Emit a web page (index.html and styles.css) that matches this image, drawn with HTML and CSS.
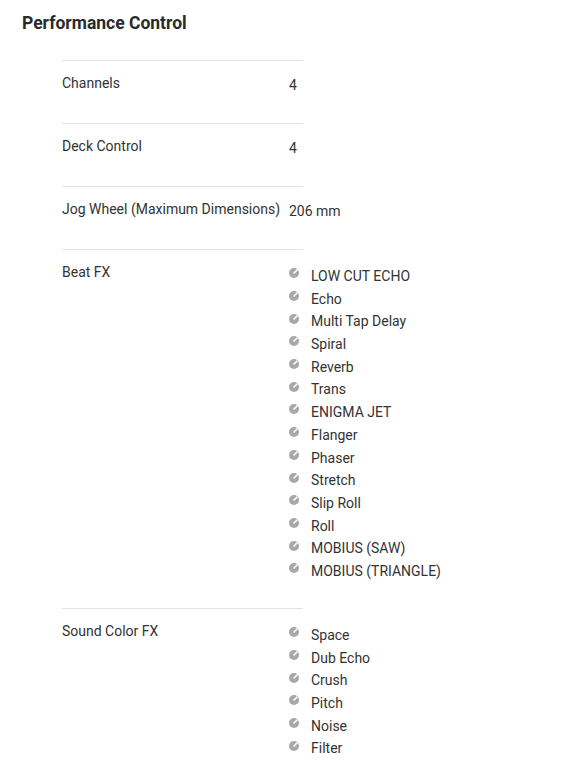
FILE: index.html
```html
<!DOCTYPE html>
<html>
<head>
<meta charset="utf-8">
<link rel="stylesheet" href="styles.css">
</head>
<body>
<svg width="0" height="0" class="defs">
  <defs>
    <symbol id="knob" viewBox="0 0 10 10">
      <circle cx="5" cy="5" r="5" fill="#a8a8a8"/>
      <line x1="5" y1="5" x2="8" y2="2" stroke="#fff" stroke-width="1.6" stroke-linecap="round"/>
    </symbol>
  </defs>
</svg>
<section class="spec">
  <h2 class="title">Performance Control</h2>
  <div class="table">
    <div class="row">
      <div class="label">Channels</div>
      <div class="value">4</div>
    </div>
    <div class="row">
      <div class="label">Deck Control</div>
      <div class="value">4</div>
    </div>
    <div class="row">
      <div class="label">Jog Wheel (Maximum Dimensions)</div>
      <div class="value">206 mm</div>
    </div>
    <div class="row">
      <div class="label">Beat FX</div>
      <ul class="list">
        <li><svg class="bullet"><use href="#knob"/></svg>LOW CUT ECHO</li>
        <li><svg class="bullet"><use href="#knob"/></svg>Echo</li>
        <li><svg class="bullet"><use href="#knob"/></svg>Multi Tap Delay</li>
        <li><svg class="bullet"><use href="#knob"/></svg>Spiral</li>
        <li><svg class="bullet"><use href="#knob"/></svg>Reverb</li>
        <li><svg class="bullet"><use href="#knob"/></svg>Trans</li>
        <li><svg class="bullet"><use href="#knob"/></svg>ENIGMA JET</li>
        <li><svg class="bullet"><use href="#knob"/></svg>Flanger</li>
        <li><svg class="bullet"><use href="#knob"/></svg>Phaser</li>
        <li><svg class="bullet"><use href="#knob"/></svg>Stretch</li>
        <li><svg class="bullet"><use href="#knob"/></svg>Slip Roll</li>
        <li><svg class="bullet"><use href="#knob"/></svg>Roll</li>
        <li><svg class="bullet"><use href="#knob"/></svg>MOBIUS (SAW)</li>
        <li><svg class="bullet"><use href="#knob"/></svg>MOBIUS (TRIANGLE)</li>
      </ul>
    </div>
    <div class="row">
      <div class="label">Sound Color FX</div>
      <ul class="list">
        <li><svg class="bullet"><use href="#knob"/></svg>Space</li>
        <li><svg class="bullet"><use href="#knob"/></svg>Dub Echo</li>
        <li><svg class="bullet"><use href="#knob"/></svg>Crush</li>
        <li><svg class="bullet"><use href="#knob"/></svg>Pitch</li>
        <li><svg class="bullet"><use href="#knob"/></svg>Noise</li>
        <li><svg class="bullet"><use href="#knob"/></svg>Filter</li>
      </ul>
    </div>
  </div>
</section>
</body>
</html>
```
FILE: styles.css
```css
html, body {
  margin: 0;
  padding: 0;
  background: #fff;
}
body {
  font-family: Roboto, "Liberation Sans", sans-serif;
  color: #333;
}
.defs {
  position: absolute;
  width: 0;
  height: 0;
}
.spec {
  padding: 12px 0 0 22px;
}
.title {
  margin: 0;
  font-size: 17.5px;
  line-height: 22px;
  font-weight: 700;
  color: #2a2a2a;
}
.table {
  margin: 26px 0 0 40px;
  width: 241px;
}
.row {
  display: grid;
  grid-template-columns: 227px max-content;
  border-top: 1px solid #e2e2e2;
  padding: 13px 0 29px;
  font-size: 14px;
  line-height: 18px;
}
.label {
  color: #333;
}
.value {
  padding-top: 2px;
  color: #333;
}
.list {
  list-style: none;
  margin: 2px 0 -3.8px;
  padding: 0;
}
.list li {
  display: flex;
  align-items: center;
  height: 22.7px;
  line-height: 22.7px;
}
.bullet {
  width: 10px;
  height: 10px;
  margin-right: 12px;
  position: relative;
  top: -3px;
  flex: none;
}
```
